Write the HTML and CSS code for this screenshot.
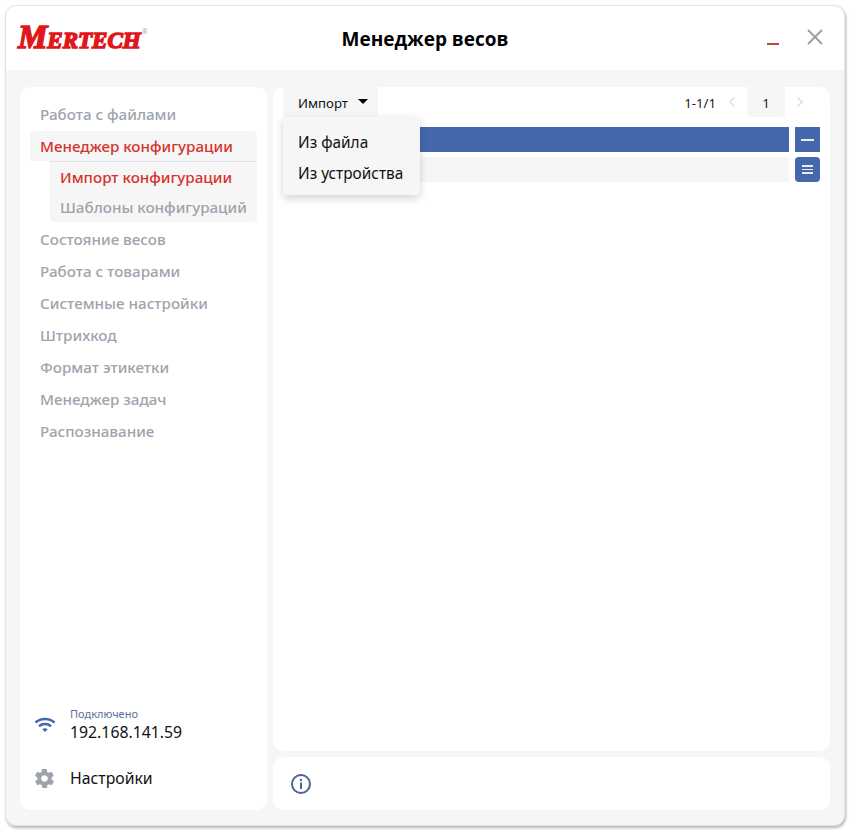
FILE: index.html
```html
<!DOCTYPE html>
<html lang="ru">
<head>
<meta charset="utf-8">
<title>Менеджер весов</title>
<link rel="stylesheet" href="styles.css">
</head>
<body>
<div class="window">
  <header class="header">
    <div class="logo"><span class="logo-text">Mertech</span><sup class="logo-reg">®</sup></div>
    <h1 class="title">Менеджер весов</h1>
    <div class="win-controls">
      <span class="minimize"></span>
      <svg class="close" width="16" height="16" viewBox="0 0 16 16"><path d="M1 1L15 15M15 1L1 15" stroke="#9a9ea6" stroke-width="1.8" fill="none"/></svg>
    </div>
  </header>
  <div class="body">
    <aside class="sidebar">
      <nav class="nav">
        <div class="nav-item">Работа с файлами</div>
        <div class="nav-item nav-active">Менеджер конфигурации</div>
        <div class="subnav">
          <div class="sub-item sub-active">Импорт конфигурации</div>
          <div class="sub-item">Шаблоны конфигураций</div>
        </div>
        <div class="nav-item">Состояние весов</div>
        <div class="nav-item">Работа с товарами</div>
        <div class="nav-item">Системные настройки</div>
        <div class="nav-item">Штрихкод</div>
        <div class="nav-item">Формат этикетки</div>
        <div class="nav-item">Менеджер задач</div>
        <div class="nav-item">Распознавание</div>
      </nav>
      <div class="status">
        <svg class="wifi" width="22" height="18" viewBox="0 0 22 18"><path d="M1.500 6.500C6.800 1.800 15.200 1.800 20.500 6.500M5 10.200C8.400 7.300 13.600 7.300 17 10.200" stroke="#4568ac" stroke-width="2.600" fill="none"/><path d="M8.300 13.200C9.900 12 12.100 12 13.700 13.200L11 16Z" fill="#4568ac"/></svg>
        <div class="status-text">
          <div class="status-label">Подключено</div>
          <div class="status-ip">192.168.141.59</div>
        </div>
      </div>
      <div class="settings">
        <svg class="gear" width="23" height="23" viewBox="0 0 24 24"><path fill="#9ea3ad" d="M19.400 13c.1-.3.1-.7.1-1s0-.7-.1-1l2.100-1.600c.2-.2.2-.4.1-.6l-2-3.500c-.1-.2-.4-.3-.6-.2l-2.500 1c-.5-.4-1.100-.7-1.700-1l-.4-2.700c0-.2-.2-.4-.5-.4h-4c-.3 0-.5.2-.5.4l-.4 2.700c-.6.3-1.200.6-1.700 1l-2.500-1c-.2-.1-.5 0-.6.2l-2 3.500c-.1.2-.1.4.1.6L4.600 11c-.1.3-.1.7-.1 1s0 .7.1 1l-2.100 1.600c-.2.2-.2.4-.1.6l2 3.500c.1.2.4.3.6.2l2.500-1c.5.4 1.100.7 1.700 1l.4 2.700c0 .2.2.4.5.4h4c.3 0 .5-.2.5-.4l.4-2.700c.6-.3 1.200-.6 1.700-1l2.500 1c.2.1.5 0 .6-.2l2-3.500c.1-.2.1-.4-.1-.6L19.400 13zM12 15.500c-1.900 0-3.500-1.600-3.500-3.500s1.600-3.500 3.500-3.500 3.500 1.600 3.500 3.500-1.600 3.500-3.500 3.500z"/></svg>
        <span class="settings-label">Настройки</span>
      </div>
    </aside>
    <div class="content">
      <main class="main">
        <div class="toolbar">
          <div class="import-wrap">
            <button class="import-btn">Импорт<span class="caret"></span></button>
            <div class="menu">
              <div class="menu-item">Из файла</div>
              <div class="menu-item">Из устройства</div>
            </div>
          </div>
          <div class="pager">
            <span class="pager-range">1-1/1</span>
            <svg class="chev" width="8" height="12" viewBox="0 0 8 12"><path d="M6.500 1.500L2 6L6.500 10.500" stroke="#dcdee2" stroke-width="1.600" fill="none"/></svg>
            <span class="pager-page">1</span>
            <svg class="chev" width="8" height="12" viewBox="0 0 8 12"><path d="M1.500 1.500L6 6L1.500 10.500" stroke="#dcdee2" stroke-width="1.600" fill="none"/></svg>
          </div>
        </div>
        <div class="rows">
          <div class="row">
            <div class="bar bar-blue"></div>
            <div class="row-btn row-btn-square"><span class="line"></span></div>
          </div>
          <div class="row">
            <div class="bar bar-grey"></div>
            <div class="row-btn row-btn-round"><span class="line thin"></span><span class="line thin"></span><span class="line thin"></span></div>
          </div>
        </div>
      </main>
      <footer class="info">
        <svg width="22" height="22" viewBox="0 0 22 22"><circle cx="11" cy="11" r="9" stroke="#4a6496" stroke-width="2" fill="none"/><circle cx="11" cy="7" r="1.200" fill="#4a6496"/><rect x="10" y="9.500" width="2" height="6.500" fill="#4a6496"/></svg>
      </footer>
    </div>
  </div>
</div>
</body>
</html>
```
FILE: styles.css
```css
* { box-sizing: border-box; }
html, body { margin: 0; height: 100%; background: #fff; }
body { padding: 6px 6px 5px 6px; font-family: "Noto Sans", "Open Sans", sans-serif; color: #111; }

.window {
  width: 838px;
  height: 819px;
  border-radius: 10px;
  background: #f6f6f7;
  box-shadow: 0 0 0 1px #e4e4e6, 1px 2px 3px 1px #b5b5b5;
  display: flex;
  flex-direction: column;
  overflow: hidden;
}
.header {
  height: 64px;
  flex: none;
  background: #fff;
  display: grid;
  grid-template-columns: 1fr auto 1fr;
  align-items: center;
}
.logo { display: flex; align-items: flex-start; padding-left: 12px; margin-top: -3px; color: #e0161b; }
.logo-text {
  font-family: "Liberation Serif", serif;
  font-weight: 700;
  font-style: italic;
  font-variant: small-caps;
  font-size: 33px;
  line-height: 26px;
  letter-spacing: 0;
  -webkit-text-stroke: 1.500px #e0161b;
}
.logo-reg { font-size: 7px; line-height: 8px; color: #c9a0a0; margin: 4px 0 0 1px; vertical-align: baseline; }
.title { margin: 2px 0 0; font-family: "Open Sans", sans-serif; font-size: 19px; font-weight: 700; color: #000; line-height: 26px; }
.win-controls { display: flex; justify-content: flex-end; align-items: center; padding-right: 21px; gap: 28px; margin-top: -2px; }
.minimize { width: 12px; height: 2px; background: #c4452c; margin-top: 14px; }
.close { display: block; }

.body { flex: 1; display: flex; gap: 6px; padding: 17px 14px 15px; min-height: 0; }
.sidebar {
  width: 247px;
  flex: none;
  background: #fff;
  border-radius: 10px;
  padding: 11px 10px 17px;
  display: flex;
  flex-direction: column;
}
.nav { flex: 1; display: flex; flex-direction: column; }
.nav-item {
  height: 32px;
  line-height: 32px;
  padding-left: 10px;
  font-size: 15.200px;
  font-weight: 500;
  color: #9ea3ad;
  white-space: nowrap;
}
.nav-active { color: #d5332a; background: #f6f6f7; border-radius: 4px 4px 0 0; height: 30px; line-height: 30px; margin-top: 1px; }
.subnav {
  margin-left: 20px;
  background: #f6f6f7;
  border-top: 1px solid #e2e3e6;
  border-radius: 0 0 4px 4px;
  height: 61px;
  margin-bottom: 1px;
}
.sub-item {
  height: 30px;
  line-height: 30px;
  padding-left: 10px;
  font-size: 15.200px;
  font-weight: 500;
  color: #9ea3ad;
  white-space: nowrap;
}
.sub-active { color: #d5332a; }

.status { display: flex; align-items: center; gap: 14px; padding-left: 4px; height: 38px; }
.wifi { display: block; margin-top: -1px; }
.status-text { display: flex; flex-direction: column; }
.status-label { font-size: 11px; line-height: 14px; color: #5c7199; }
.status-ip { font-size: 15.800px; line-height: 22px; color: #111; }
.settings { display: flex; align-items: center; gap: 14px; padding-left: 3px; height: 30px; margin-top: 19px; }
.gear { display: block; }
.settings-label { font-size: 15.800px; color: #111; }

.content { flex: 1; display: flex; flex-direction: column; gap: 6px; min-width: 0; }
.main { flex: 1; background: #fff; border-radius: 10px; padding: 0 10px 0 10px; }
.info { height: 53px; flex: none; background: #fff; border-radius: 10px; display: flex; align-items: center; padding: 0 0 0 17px; }
.info svg { display: block; }

.toolbar { height: 30px; display: flex; justify-content: space-between; align-items: center; }
.import-wrap { position: relative; height: 30px; }
.import-btn {
  height: 30px;
  width: 95px;
  border: 0;
  background: #f6f6f7;
  font-family: inherit;
  font-size: 13.200px;
  color: #111;
  display: flex;
  align-items: center;
  padding: 1px 0 0 15px;
  gap: 10px;
}
.caret { width: 0; height: 0; border-left: 5px solid transparent; border-right: 5px solid transparent; border-top: 5px solid #000; margin-top: -2px; }
.menu {
  position: absolute;
  left: 0;
  top: 30px;
  width: 137px;
  height: 78px;
  background: #f6f6f7;
  border-radius: 3px;
  box-shadow: 0 3px 8px rgba(0,0,0,.18);
  padding-top: 10px;
  z-index: 5;
}
.menu-item { height: 31px; line-height: 31px; padding-left: 15px; font-size: 15.400px; color: #111; white-space: nowrap; }
.pager { display: flex; align-items: center; padding-right: 16px; }
.pager-range { font-size: 13.200px; line-height: 30px; padding-top: 1px; color: #222; margin-right: 12px; }
.pager-page { width: 38px; height: 30px; line-height: 32px; margin: 0 11px 0 11px; text-align: center; background: #f6f6f7; border-radius: 3px; font-size: 13.200px; color: #222; }
.chev { display: block; }

.rows { display: flex; flex-direction: column; gap: 5px; margin-top: 10px; }
.row { display: flex; gap: 6px; height: 25px; }
.bar { flex: 1; }
.bar-blue { background: #4568ac; }
.bar-grey { background: #f6f6f7; }
.row-btn { width: 25px; height: 25px; background: #4568ac; display: flex; flex-direction: column; align-items: center; justify-content: center; gap: 2px; }
.row-btn-round { border-radius: 4px; }
.line { display: block; width: 13px; height: 2px; background: #e8ecf5; }
.line.thin { width: 11px; height: 1.500px; }
```
